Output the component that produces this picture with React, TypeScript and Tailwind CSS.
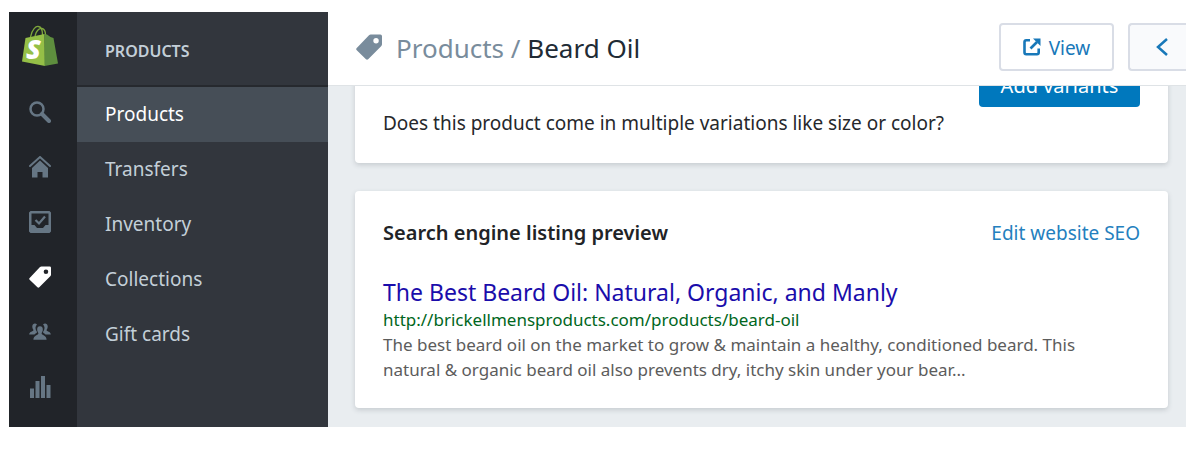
import type { ReactNode } from "react";

type RailItem = { id: string; label: string; icon: ReactNode; active?: boolean };

const NAV_ITEMS = ["Products", "Transfers", "Inventory", "Collections", "Gift cards"];

// ── Icons ────────────────────────────────────────────

function ShopLogo() {
  return (
    <svg width="36" height="42" viewBox="0 0 36 42" aria-label="Shopify" role="img">
      <path d="M8.500 12C10 4 14 1 16.500 1.500C20 2 20.500 7 20.500 10M13 11C14 6 17 3 20 3.500C22.500 4 23.500 7 23.500 10" fill="none" stroke="#7fa83c" strokeWidth="1.300" />
      <path d="M3.500 13L22.500 9L23 41L0 36.500Z" fill="#95bf47" />
      <path d="M22.500 9L25 9.500L28.500 12L31.500 13L36 38.500L22.500 41Z" fill="#5e8e3e" />
      <text x="4" y="34" fontFamily="Open Sans, sans-serif" fontSize="27" fontWeight="800" fontStyle="italic" fill="#fff">
        S
      </text>
    </svg>
  );
}

function SearchIcon() {
  return (
    <svg width="22" height="22" viewBox="0 0 22 22" fill="none" stroke="currentColor" aria-hidden="true">
      <circle cx="8" cy="8" r="6.500" strokeWidth="2.500" />
      <path d="M13 13L20 20" strokeWidth="4" strokeLinecap="round" />
    </svg>
  );
}

function HomeIcon() {
  return (
    <svg width="22" height="22" viewBox="0 0 22 22" aria-hidden="true">
      <path d="M1 10L11 1L21 10" fill="none" stroke="currentColor" strokeWidth="2" strokeLinecap="round" />
      <path d="M11 4.500L19 12V21.500H13.500V16H8.500V21.500H3V12Z" fill="currentColor" />
    </svg>
  );
}

function OrdersIcon() {
  return (
    <svg width="22" height="22" viewBox="0 0 22 22" aria-hidden="true">
      <path
        d="M1.500 0H20.500L22 1.500V20.500L20.500 22H1.500L0 20.500V1.500ZM2.500 2.500V14H5.500L8 17H14L16.500 14H19.500V2.500Z"
        fill="currentColor"
        fillRule="evenodd"
      />
      <path d="M6.500 9L10 12.500L16 5.500" fill="none" stroke="currentColor" strokeWidth="2.200" />
    </svg>
  );
}

function TagIcon({ size }: { size: number }) {
  return (
    <svg width={size} height={size} viewBox="0 0 24 24" aria-hidden="true">
      <path
        d="M13.500 0.500H22.500Q24 0.500 24 2V9.500Q24 10.500 23.200 11.300L11.200 23.300Q10.200 24.200 9.200 23.300L0.700 15Q-0.300 14 0.700 13L12 1.200Q12.700 0.500 13.500 0.500ZM18.500 3.800A2.500 2.500 0 1 0 18.500 8.800A2.500 2.500 0 1 0 18.500 3.800Z"
        fill="currentColor"
        fillRule="evenodd"
      />
    </svg>
  );
}

function PeopleIcon() {
  return (
    <svg width="22" height="18" viewBox="0 0 22 18" fill="currentColor" aria-hidden="true">
      <path d="M8 1.500C6.500 -0.200 3.500 0.300 3.300 3.200C3.200 5 3.800 6 4.500 7C4.600 8.500 0.300 8.500 0.200 11.500H5.500C6.300 10.300 8 10 8 9C6 6.500 6 3.500 8 1.500Z" />
      <path d="M14 1.500C15.500 -0.200 18.500 0.300 18.700 3.200C18.800 5 18.200 6 17.500 7C17.400 8.500 21.700 8.500 21.800 11.500H16.500C15.700 10.300 14 10 14 9C16 6.500 16 3.500 14 1.500Z" />
      <path d="M11 3.200C8.800 3.200 8 4.800 8.200 7C8.300 8.500 9 9.300 9.400 10.200C9.500 12.300 4.500 12 4.400 16.800H17.600C17.500 12 12.500 12.300 12.600 10.200C13 9.300 13.700 8.500 13.800 7C14 4.800 13.200 3.200 11 3.200Z" />
    </svg>
  );
}

function ReportsIcon() {
  return (
    <svg width="22" height="22" viewBox="0 0 22 22" fill="currentColor" aria-hidden="true">
      <rect x="1" y="12.500" width="4" height="9.500" />
      <rect x="6.500" y="5" width="4" height="17" />
      <rect x="12" y="0" width="4" height="22" />
      <rect x="17.500" y="9" width="4" height="13" />
    </svg>
  );
}

function ExternalIcon() {
  return (
    <svg width="18" height="18" viewBox="0 0 18 18" fill="none" stroke="currentColor" strokeWidth="2.600" aria-hidden="true">
      <path d="M7 2.300H3.200Q1.500 2.300 1.500 4V14.600Q1.500 16.300 3.200 16.300H14Q15.700 16.300 15.700 14.600V10.500" />
      <path d="M7.500 10.500L14 4" />
      <path d="M10 0.500H17.500V8Z" fill="currentColor" stroke="none" />
    </svg>
  );
}

const RAIL_ITEMS: RailItem[] = [
  { id: "search", label: "Search", icon: <SearchIcon /> },
  { id: "home", label: "Home", icon: <HomeIcon /> },
  { id: "orders", label: "Orders", icon: <OrdersIcon /> },
  { id: "products", label: "Products", icon: <TagIcon size={22} />, active: true },
  { id: "customers", label: "Customers", icon: <PeopleIcon /> },
  { id: "reports", label: "Reports", icon: <ReportsIcon /> },
];

// ── Navigation ───────────────────────────────────────

function Rail() {
  return (
    <nav aria-label="Main" className="flex w-[68px] shrink-0 flex-col bg-[#212429]">
      <a href="#" className="flex h-[72px] items-center pb-1 pl-[13px]">
        <ShopLogo />
      </a>
      {RAIL_ITEMS.map((item) => (
        <a
          key={item.id}
          href={`#${item.id}`}
          aria-label={item.label}
          className={`flex h-[55px] w-[62px] items-center justify-center ${
            item.active ? "text-white" : "text-[#667684]"
          }`}
        >
          {item.icon}
        </a>
      ))}
    </nav>
  );
}

function Sidebar() {
  return (
    <nav aria-label="Products" className="w-[251px] shrink-0 bg-[#32363d] text-[#c3cfd8]">
      <h2 className="flex h-[75px] items-center border-b-2 border-[#26292e] px-7 pt-1 text-[16px] font-semibold">
        PRODUCTS
      </h2>
      {NAV_ITEMS.map((item, i) => (
        <a
          key={item}
          href="#"
          className={`flex h-[55px] items-center px-7 text-[19px] ${i === 0 ? "bg-[#464e57] text-white" : ""}`}
        >
          {item}
        </a>
      ))}
    </nav>
  );
}

// ── Main area ────────────────────────────────────────

function Header() {
  return (
    <header className="flex h-[74px] items-center border-b border-[#dfe3e6] bg-white pl-7">
      <span className="pb-1 text-[#798c9c]">
        <TagIcon size={26} />
      </span>
      <h1 className="ml-[14px] text-[26px] text-[#212b35]">
        <a href="#" className="text-[#798c9c]">
          Products
        </a>
        <span className="text-[#798c9c]"> / </span>
        Beard Oil
      </h1>
      <div className="ml-auto flex gap-[14px] pb-1">
        <button className="flex h-12 w-[115px] items-center justify-center gap-2 rounded border-2 border-[#d9dde6] bg-white text-[19px] text-[#1878b9]">
          <ExternalIcon />
          <span className="pt-1">View</span>
        </button>
        <button
          aria-label="Previous product"
          className="flex h-12 w-[58px] items-center justify-center rounded-l border-2 border-r-0 border-[#d9dde6] bg-[#f9fafc] pl-2 text-[#1878b9]"
        >
          <svg width="12" height="18" viewBox="0 0 12 18" fill="none" stroke="currentColor" strokeWidth="2.500" aria-hidden="true">
            <path d="M11 1L2 9L11 17" />
          </svg>
        </button>
      </div>
    </header>
  );
}

function VariantsCard() {
  return (
    <section className="flex flex-col rounded bg-white px-7 pt-6 pb-7 shadow-[0_2px_5px_rgba(60,70,80,0.2)]">
      <button className="h-[46px] w-[161px] self-end rounded-sm bg-[#0078bd] pt-1 text-[20px] text-white">
        Add variants
      </button>
      <p className="mt-1 text-[19px] leading-6 text-[#26282c]">
        Does this product come in multiple variations like size or color?
      </p>
    </section>
  );
}

function SeoCard() {
  return (
    <section className="rounded bg-white px-7 pt-[30px] pb-[26px] shadow-[0_2px_5px_rgba(60,70,80,0.2)]">
      <div className="flex items-center justify-between leading-6">
        <h2 className="text-[20px] font-semibold text-[#212326]">Search engine listing preview</h2>
        <a href="#" className="text-[19px] text-[#2480be]">
          Edit website SEO
        </a>
      </div>
      <p className="mt-8 text-[23px] leading-[30px] text-[#1a0dab]">The Best Beard Oil: Natural, Organic, and Manly</p>
      <p className="text-[17px] leading-[25px] text-[#006621]">http://brickellmensproducts.com/products/beard-oil</p>
      <p className="max-w-[720px] text-[17px] leading-[25px] text-[#5c5c5c]">
        The best beard oil on the market to grow &amp; maintain a healthy, conditioned beard. This natural &amp; organic
        beard oil also prevents dry, itchy skin under your bear...
      </p>
    </section>
  );
}

export default function App() {
  return (
    <div className="bg-white pt-3 pr-[14px] pb-5 pl-[9px] font-['Noto_Sans',sans-serif]">
      <div className="flex">
        <Rail />
        <Sidebar />
        <main className="min-w-0 flex-1 bg-[#e9edf0]">
          <Header />
          {/* Scrolled part: the first card runs up under the header */}
          <div className="overflow-hidden">
            <div className="-mt-[49px] flex flex-col gap-7 pr-[18px] pb-[19px] pl-[27px]">
              <VariantsCard />
              <SeoCard />
            </div>
          </div>
        </main>
      </div>
    </div>
  );
}
